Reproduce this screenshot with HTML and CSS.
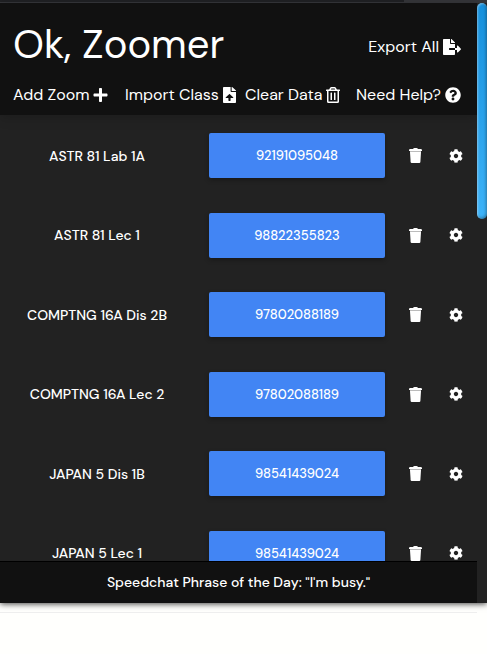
FILE: index.html
```
<!DOCTYPE html>
<html lang="en">
<head>
<meta charset="utf-8">
<title>Ok, Zoomer</title>
<link rel="stylesheet" href="styles.css">
</head>
<body>
<svg class="sprite" aria-hidden="true">
  <symbol id="trash" viewBox="0 0 13 15"><path d="M0 2.300Q0 1 1.300 1H4Q4.500 0 5.500 0h2Q8.500 0 9 1h2.700Q13 1 13 2.300V3H0z"/><path d="M1 4h11l-.6 10Q11.300 15 10.300 15H2.700Q1.700 15 1.600 14z"/><path class="lid-line" d="M1 3h11v1H1z"/></symbol>
  <symbol id="gear" viewBox="0 0 512 512"><path d="M487.400 315.700l-42.600-24.600c4.300-23.200 4.300-47 0-70.200l42.600-24.600c4.900-2.800 7.100-8.600 5.500-14-11.100-35.600-30-67.800-54.700-94.600-3.800-4.100-10-5.100-14.800-2.300L380.800 110c-17.900-15.400-38.500-27.300-60.800-35.100V25.800c0-5.600-3.900-10.500-9.400-11.700-36.700-8.200-74.300-7.800-109.200 0-5.500 1.200-9.400 6.100-9.400 11.700V75c-22.200 7.900-42.800 19.800-60.800 35.100L88.700 85.500c-4.900-2.800-11-1.900-14.800 2.300-24.700 26.700-43.600 58.900-54.700 94.600-1.700 5.400.6 11.200 5.500 14L67.300 221c-4.300 23.200-4.300 47 0 70.200l-42.600 24.600c-4.900 2.800-7.100 8.600-5.500 14 11.100 35.600 30 67.800 54.700 94.600 3.800 4.100 10 5.100 14.800 2.300l42.600-24.600c17.900 15.400 38.500 27.300 60.800 35.100v49.200c0 5.600 3.900 10.500 9.400 11.700 36.700 8.200 74.300 7.800 109.200 0 5.500-1.200 9.400-6.100 9.400-11.700v-49.200c22.200-7.900 42.800-19.800 60.800-35.100l42.600 24.600c4.900 2.800 11 1.900 14.800-2.300 24.700-26.700 43.600-58.900 54.700-94.600 1.500-5.500-.7-11.300-5.600-14.100zM256 336c-44.100 0-80-35.900-80-80s35.900-80 80-80 80 35.900 80 80-35.900 80-80 80z"/></symbol>
</svg>
<div class="popup">
  <div class="tabstrip"></div>
  <div class="window">
    <main class="app">
      <header class="header">
        <div class="titlebar">
          <h1>Ok, Zoomer</h1>
          <button class="tool" type="button">Export All
            <svg class="icon-export" viewBox="0 0 576 512" aria-hidden="true"><path d="M384 121.900c0-6.300-2.500-12.400-7-16.900L279.100 7c-4.500-4.500-10.600-7-17-7H256v128h128zM571 308l-95.700-96.400c-10.100-10.100-27.400-3-27.400 11.300V288h-64v64h64v65.200c0 14.300 17.300 21.400 27.400 11.300L571 332c6.600-6.600 6.600-17.400 0-24zm-379 28v-32c0-8.800 7.200-16 16-16h176V160H248c-13.200 0-24-10.800-24-24V0H24C10.700 0 0 10.700 0 24v464c0 13.300 10.700 24 24 24h336c13.300 0 24-10.700 24-24V352H208c-8.800 0-16-7.200-16-16z"/></svg>
          </button>
        </div>
        <nav class="toolbar">
          <button class="tool" type="button">Add Zoom
            <svg class="icon-plus" viewBox="0 0 448 512" aria-hidden="true"><path d="M416 208H272V64c0-17.700-14.300-32-32-32h-32c-17.700 0-32 14.300-32 32v144H32c-17.700 0-32 14.300-32 32v32c0 17.700 14.300 32 32 32h144v144c0 17.700 14.300 32 32 32h32c17.700 0 32-14.300 32-32V304h144c17.700 0 32-14.300 32-32v-32c0-17.700-14.300-32-32-32z"/></svg>
          </button>
          <button class="tool" type="button">Import Class
            <svg class="icon-file" viewBox="0 0 384 512" preserveAspectRatio="none" aria-hidden="true"><path d="M224 136V0H24C10.700 0 0 10.700 0 24v464c0 13.300 10.700 24 24 24h336c13.300 0 24-10.700 24-24V160H248c-13.200 0-24-10.800-24-24zm65.200 216H224v80c0 8.800-7.200 16-16 16h-32c-8.800 0-16-7.200-16-16v-80H94.800c-14.300 0-21.400-17.300-11.300-27.400l96.400-95.700c6.700-6.600 17.400-6.600 24 0l96.400 95.700c10.200 10.100 3 27.400-11.100 27.400zM377 105L279.100 7c-4.500-4.500-10.600-7-17-7H256v128h128v-6.100c0-6.300-2.500-12.400-7-16.900z"/></svg>
          </button>
          <button class="tool" type="button">Clear Data
            <svg class="icon-bin" viewBox="0 0 448 512" aria-hidden="true"><path d="M268 416h24a12 12 0 0 0 12-12V188a12 12 0 0 0-12-12h-24a12 12 0 0 0-12 12v216a12 12 0 0 0 12 12zM432 80h-82.400l-34-56.700A48 48 0 0 0 274.400 0H173.600a48 48 0 0 0-41.200 23.300L98.400 80H16A16 16 0 0 0 0 96v16a16 16 0 0 0 16 16h16v336a48 48 0 0 0 48 48h288a48 48 0 0 0 48-48V128h16a16 16 0 0 0 16-16V96a16 16 0 0 0-16-16zM171.800 50.900a6 6 0 0 1 5.200-2.900h94a6 6 0 0 1 5.200 2.900L293.600 80H154.400zM368 464H80V128h288zm-212-48h24a12 12 0 0 0 12-12V188a12 12 0 0 0-12-12h-24a12 12 0 0 0-12 12v216a12 12 0 0 0 12 12z"/></svg>
          </button>
          <button class="tool" type="button">Need Help?
            <svg class="icon-help" viewBox="0 0 512 512" aria-hidden="true"><path d="M504 256c0 137-111 248-248 248S8 393 8 256C8 119.100 119 8 256 8s248 111.100 248 248zM262.700 90c-54.500 0-89.300 23-116.500 63.800-3.500 5.300-2.400 12.400 2.700 16.300l34.700 26.300c5.200 3.900 12.600 3 16.700-2.100 17.900-22.700 30.100-35.800 57.300-35.800 20.400 0 45.700 13.100 45.700 33 0 15-12.400 22.700-32.500 34C247.100 238.500 216 254.900 216 296v4c0 6.600 5.400 12 12 12h56c6.600 0 12-5.400 12-12v-1.300c0-28.500 83.200-29.600 83.200-106.700 0-58-60.200-102-116.500-102zM256 338c-25.400 0-46 20.600-46 46s20.600 46 46 46 46-20.600 46-46-20.600-46-46-46z"/></svg>
          </button>
        </nav>
      </header>
      <div class="viewport">
        <ul class="classes">
          <li class="class-row"><span class="name">ASTR 81 Lab 1A</span><button class="join" type="button">92191095048</button><button class="action" type="button" aria-label="Delete"><svg class="icon-trash"><use href="#trash"/></svg></button><button class="action" type="button" aria-label="Settings"><svg class="icon-gear"><use href="#gear"/></svg></button></li>
          <li class="class-row"><span class="name">ASTR 81 Lec 1</span><button class="join" type="button">98822355823</button><button class="action" type="button" aria-label="Delete"><svg class="icon-trash"><use href="#trash"/></svg></button><button class="action" type="button" aria-label="Settings"><svg class="icon-gear"><use href="#gear"/></svg></button></li>
          <li class="class-row"><span class="name">COMPTNG 16A Dis 2B</span><button class="join" type="button">97802088189</button><button class="action" type="button" aria-label="Delete"><svg class="icon-trash"><use href="#trash"/></svg></button><button class="action" type="button" aria-label="Settings"><svg class="icon-gear"><use href="#gear"/></svg></button></li>
          <li class="class-row"><span class="name">COMPTNG 16A Lec 2</span><button class="join" type="button">97802088189</button><button class="action" type="button" aria-label="Delete"><svg class="icon-trash"><use href="#trash"/></svg></button><button class="action" type="button" aria-label="Settings"><svg class="icon-gear"><use href="#gear"/></svg></button></li>
          <li class="class-row"><span class="name">JAPAN 5 Dis 1B</span><button class="join" type="button">98541439024</button><button class="action" type="button" aria-label="Delete"><svg class="icon-trash"><use href="#trash"/></svg></button><button class="action" type="button" aria-label="Settings"><svg class="icon-gear"><use href="#gear"/></svg></button></li>
          <li class="class-row"><span class="name">JAPAN 5 Lec 1</span><button class="join" type="button">98541439024</button><button class="action" type="button" aria-label="Delete"><svg class="icon-trash"><use href="#trash"/></svg></button><button class="action" type="button" aria-label="Settings"><svg class="icon-gear"><use href="#gear"/></svg></button></li>
        </ul>
      </div>
      <footer class="phrase">Speedchat Phrase of the Day: "I'm busy."</footer>
    </main>
    <div class="scroll-track"><div class="scroll-thumb"></div></div>
  </div>
</div>
<div class="page-below"></div>
</body>
</html>
```

FILE: styles.css
```
* {
  box-sizing: border-box;
}

body {
  margin: 0;
  height: 100vh;
  display: flex;
  flex-direction: column;
  overflow: hidden;
  background: #fffffd;
  color: #fff;
  font-family: "DM Sans", Inter, "Liberation Sans", sans-serif;
  font-size: 14px;
  font-weight: 500;
}

button {
  padding: 0;
  border: 0;
  background: none;
  color: inherit;
  font: inherit;
  cursor: pointer;
}

svg {
  display: block;
  fill: currentColor;
}

.sprite {
  display: none;
}

.popup {
  flex: 1;
  min-height: 0;
  display: flex;
  flex-direction: column;
  background: #222;
  box-shadow: 0 1px 6px rgba(0, 0, 0, 0.75);
}

.tabstrip {
  height: 3px;
  flex: none;
  border-bottom: 1px solid #35363a;
  background: linear-gradient(90deg, #202124 83%, #35363a 83%);
}

.window {
  flex: 1;
  min-height: 0;
  display: flex;
}

.app {
  flex: 1;
  min-width: 0;
  display: flex;
  flex-direction: column;
}

.header {
  flex: none;
  height: 112px;
  padding: 10px 16px 0 13px;
  background: #111;
  box-shadow: 0 2px 12px rgba(0, 0, 0, 0.2);
}

.titlebar {
  height: 62px;
  display: flex;
  align-items: center;
  justify-content: space-between;
}

.titlebar .tool {
  padding-top: 6px;
}

h1 {
  margin: 0;
  font-size: 40px;
  line-height: 56px;
  font-weight: 400;
}

.toolbar {
  height: 40px;
  display: grid;
  grid-template-columns: 112fr 120fr 111fr auto;
  align-items: center;
}

.tool {
  display: flex;
  align-items: center;
  gap: 4px;
  font-size: 16px;
  font-weight: 450;
  line-height: 20px;
  white-space: nowrap;
}

.icon-export {
  width: 18px;
  height: 16px;
}

.icon-plus {
  width: 15px;
  height: 16px;
}

.icon-file {
  width: 13px;
  height: 16px;
}

.icon-bin {
  width: 14px;
  height: 16px;
}

.icon-help {
  width: 16px;
  height: 16px;
}

.viewport {
  flex: 1;
  min-height: 0;
  overflow: hidden;
  padding-top: 18px;
}

.classes {
  display: grid;
  grid-auto-rows: 1fr;
  height: 477px;
  margin: 0;
  padding: 0;
  list-style: none;
}

.class-row {
  display: grid;
  grid-template-columns: 1fr 185px 40px 40px;
  column-gap: 1px;
  align-items: center;
  align-content: start;
  padding-right: 1px;
}

.name {
  padding-right: 14px;
  text-align: center;
}

.join {
  height: 45px;
  margin-right: 9px;
  border-radius: 2px;
  background: #4285f4;
  box-shadow: 0 2px 5px rgba(0, 0, 0, 0.3);
  font-size: 13px;
}

.action {
  height: 40px;
  display: grid;
  place-items: center;
}

.icon-trash {
  width: 13px;
  height: 15px;
}

.lid-line {
  fill: #bbb;
}

.icon-gear {
  width: 14px;
  height: 14px;
}

.phrase {
  flex: none;
  height: 42px;
  border-top: 1px solid #000;
  background: #111;
  line-height: 41px;
  text-align: center;
}

.scroll-track {
  flex: none;
  width: 10px;
  background: #222;
}

.scroll-thumb {
  height: 36%;
  border-radius: 5px;
  background: linear-gradient(180deg, #1690dc, #3db3f8);
  box-shadow: inset 1px 1px 2px rgba(255, 255, 255, 0.4), inset -1px -1px 3px rgba(0, 0, 0, 0.35);
}

.page-below {
  flex: none;
  height: 51px;
  margin-right: 10px;
  padding-top: 9px;
}

.page-below::before {
  content: "";
  display: block;
  border-top: 1px solid #eee;
}
```
